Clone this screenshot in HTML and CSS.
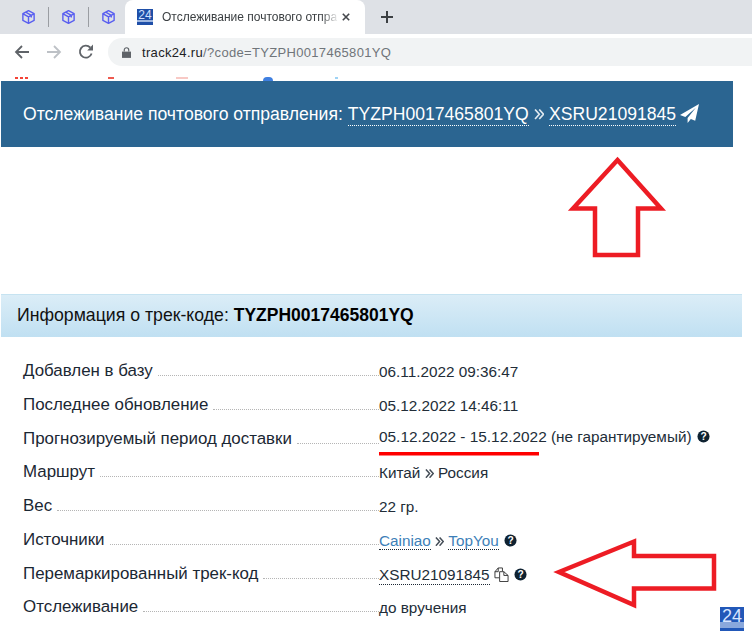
FILE: index.html
```html
<!DOCTYPE html>
<html lang="ru">
<head>
<meta charset="utf-8">
<title>Отслеживание почтового отправления</title>
<link rel="stylesheet" href="styles.css">
</head>
<body>
<div class="tabstrip">
  <div class="pinned">
    <svg class="cube" viewBox="0 0 16 16"><path d="M8 1.2 14 4.4V11.6L8 14.8 2 11.6V4.4ZM2.3 4.6 8 7.8 13.7 4.6M8 7.8V14.6M5 2.9 11 6.2V8.6"/></svg>
    <span class="sep"></span>
    <svg class="cube" viewBox="0 0 16 16"><path d="M8 1.2 14 4.4V11.6L8 14.8 2 11.6V4.4ZM2.3 4.6 8 7.8 13.7 4.6M8 7.8V14.6M5 2.9 11 6.2V8.6"/></svg>
    <span class="sep"></span>
    <svg class="cube" viewBox="0 0 16 16"><path d="M8 1.2 14 4.4V11.6L8 14.8 2 11.6V4.4ZM2.3 4.6 8 7.8 13.7 4.6M8 7.8V14.6M5 2.9 11 6.2V8.6"/></svg>
  </div>
  <div class="tab">
    <span class="favicon">24</span>
    <span class="tabtitle">Отслеживание почтового отпра</span>
    <svg class="tabclose" viewBox="0 0 10 10"><path d="M1 1 9 9M9 1 1 9"/></svg>
  </div>
  <svg class="newtab" viewBox="0 0 12 12"><path d="M6 0V12M0 6H12"/></svg>
</div>
<div class="toolbar">
  <svg class="nav" viewBox="0 0 16 16"><path class="dark" d="M15 8H2M8 2 2 8 8 14"/></svg>
  <svg class="nav" viewBox="0 0 16 16"><path class="light" d="M1 8H14M8 2 14 8 8 14"/></svg>
  <svg class="nav" viewBox="0 0 16 16"><path class="dark" d="M13.6 9.5A6 6 0 1 1 12.2 3.5"/><path class="fill" d="M9.2 6.4H15V.6Z"/></svg>
  <div class="omnibox">
    <svg class="lock" viewBox="0 0 10 12"><path class="fill" d="M0 5H10V12H0Z"/><path class="shackle" d="M2.500 5V3.200A2.500 2.500 0 0 1 7.500 3.200V5"/></svg>
    <span class="url"><span class="host">track24.ru</span>/?code=TYZPH0017465801YQ</span>
  </div>
</div>
<div class="bookmarks">
  <i class="sliver s1"></i><i class="sliver s2"></i><i class="sliver s3"></i><i class="sliver s4"></i><i class="sliver s5"></i>
</div>
<main class="page">
  <h1 class="banner">Отслеживание почтового отправления: <span class="code">TYZPH0017465801YQ</span> <svg class="chev" viewBox="0 0 10 10"><path d="M1 .5 5 5 1 9.500M5 .5 9 5 5 9.500"/></svg> <span class="code">XSRU21091845</span>
    <svg class="plane" viewBox="0 0 20 20"><path d="M20 0 0 11.500l5.600 2.300L16.600 4 8 14.800V20l3.400-4.200 4.600 1.900Z"/></svg>
  </h1>
  <h2 class="infobar">Информация о трек-коде: <b>TYZPH0017465801YQ</b></h2>
  <div class="rows">
    <div class="row"><span class="label">Добавлен в базу</span><span class="dots"></span><span class="value">06.11.2022 09:36:47</span></div>
    <div class="row"><span class="label">Последнее обновление</span><span class="dots"></span><span class="value">05.12.2022 14:46:11</span></div>
    <div class="row"><span class="label">Прогнозируемый период доставки</span><span class="dots"></span><span class="value raised"><span class="big">05.12.2022 - 15.12.2022</span> (не гарантируемый) <svg class="help" viewBox="0 0 14 14"><circle cx="7" cy="7" r="6.500"/><text x="7" y="10.600">?</text></svg></span></div>
    <div class="row"><span class="label">Маршрут</span><span class="dots"></span><span class="value">Китай <svg class="chev" viewBox="0 0 10 10"><path d="M1 .5 5 5 1 9.500M5 .5 9 5 5 9.500"/></svg> Россия</span></div>
    <div class="row"><span class="label">Вес</span><span class="dots"></span><span class="value">22 гр.</span></div>
    <div class="row"><span class="label">Источники</span><span class="dots"></span><span class="value"><a class="link">Cainiao</a> <svg class="chev" viewBox="0 0 10 10"><path d="M1 .5 5 5 1 9.500M5 .5 9 5 5 9.500"/></svg> <a class="link">TopYou</a> <svg class="help" viewBox="0 0 14 14"><circle cx="7" cy="7" r="6.500"/><text x="7" y="10.600">?</text></svg></span></div>
    <div class="row"><span class="label">Перемаркированный трек-код</span><span class="dots"></span><span class="value"><span class="code dark-code">XSRU21091845</span> <svg class="copy" viewBox="0 0 16 16"><path d="M5.500 11.500H1V5L4.500 1H9V4.500M4.500 1V5H1M6 5H10.500L15 9V15.500H6ZM10.500 5V9H15"/></svg> <svg class="help" viewBox="0 0 14 14"><circle cx="7" cy="7" r="6.500"/><text x="7" y="10.600">?</text></svg></span></div>
    <div class="row"><span class="label">Отслеживание</span><span class="dots"></span><span class="value">до вручения</span></div>
  </div>
</main>
<svg class="annot" viewBox="0 0 752 639" width="752" height="639">
  <path class="arrow" d="M617.500 160 661 208.500H638V255H595V208.500H573Z"/>
  <path class="arrow" d="M634 541.500V556H714V588.500H634V605L559 572Z"/>
  <path class="uline" d="M379 453.700H539"/>
</svg>
<span class="badge">24</span>
</body>
</html>
```

FILE: styles.css
```css
* { box-sizing: border-box; }
html, body { margin: 0; padding: 0; }
body {
  width: 752px;
  height: 639px;
  overflow: hidden;
  position: relative;
  background: #fff;
  font-family: "Liberation Sans", Arial, sans-serif;
  color: #1b2733;
}
.tabstrip {
  height: 34px;
  background: #dee1e6;
  display: flex;
  align-items: flex-start;
}
.pinned {
  width: 125px;
  height: 34px;
  padding-left: 21px;
  display: flex;
  align-items: center;
}
.cube { width: 15px; height: 16px; flex: none; }
.cube path { fill: none; stroke: #5a5ff0; stroke-width: 1.5; stroke-linejoin: round; }
.sep { width: 1px; height: 20px; background: #9a9da2; margin: 0 12px; flex: none; }
.tab {
  width: 240px;
  height: 34px;
  background: #fff;
  border-radius: 8px 8px 0 0;
  display: flex;
  align-items: center;
  padding-left: 12px;
}
.favicon {
  width: 16px;
  height: 16px;
  flex: none;
  background: linear-gradient(#1f4fa8 0 68%, #9db6e0 68% 84%, #1f4fa8 84%);
  color: #cfe0ff;
  font-size: 12px;
  line-height: 12px;
  text-align: center;
}
.tabtitle {
  font-size: 12px;
  margin-left: 9px;
  width: 177px;
  white-space: nowrap;
  overflow: hidden;
  color: #3c4043;
  -webkit-mask-image: linear-gradient(90deg, #000 90%, transparent);
  mask-image: linear-gradient(90deg, #000 90%, transparent);
}
.tabclose { width: 8px; height: 8px; margin-left: 3px; flex: none; }
.tabclose path { stroke: #45484c; stroke-width: 2; fill: none; }
.newtab { width: 12px; height: 12px; margin: 11px 0 0 16px; flex: none; }
.newtab path { stroke: #3c4043; stroke-width: 2; fill: none; }
.toolbar {
  height: 32px;
  display: flex;
  align-items: center;
  padding-left: 14px;
  background: #fff;
}
.nav { width: 16px; height: 16px; flex: none; margin-right: 16px; margin-top: 4px; }
.nav path { fill: none; stroke-width: 1.8; }
.nav .dark { stroke: #5f6368; }
.nav .light { stroke: #bdc1c6; }
.nav .fill { fill: #5f6368; stroke: none; }
.omnibox {
  flex: 1;
  height: 28px;
  margin-top: 4px;
  margin-left: -2px;
  background: #f1f3f4;
  border-radius: 14px 0 0 14px;
  display: flex;
  align-items: center;
  padding-left: 14px;
}
.lock { width: 9px; height: 11px; flex: none; }
.lock .fill { fill: #5f6368; }
.lock .shackle { fill: none; stroke: #5f6368; stroke-width: 1.3; }
.url { font-size: 13px; margin-left: 11px; color: #70757a; letter-spacing: .025em; }
.host { color: #202124; }
.bookmarks { height: 15px; position: relative; }
.sliver { position: absolute; top: 11px; height: 2px; }
.s1 { left: 15px; width: 13px; background: repeating-linear-gradient(90deg, #f44336 0 3px, #fff 3px 5px); }
.s2 { left: 108px; width: 6px; background: #ee5a4f; }
.s3 { left: 176px; width: 12px; background: #f8c9c5; }
.s4 { left: 263px; width: 10px; height: 4px; top: 11px; background: #3f7fe0; border-radius: 5px 5px 0 0; }
.s5 { left: 335px; width: 3px; background: #9fd3f5; }
.page { display: flex; flex-direction: column; align-items: flex-start; padding-left: 1px; }
.banner {
  width: 732px;
  height: 66px;
  margin: 0 0 147px;
  background: #2b6591;
  color: #fff;
  font-size: 17.6px;
  font-weight: 400;
  line-height: 66px;
  padding-left: 22px;
  white-space: nowrap;
}
.code { border-bottom: 1px dotted #fff; padding-bottom: 1px; }
.dark-code { border-bottom-color: #1b2733; }
.chev { width: .6em; height: .6em; vertical-align: 0; }
.chev path { fill: none; stroke: currentColor; stroke-width: 1.6; opacity: .85; }
.plane { width: 19px; height: 19px; fill: #fff; vertical-align: -3px; margin-left: -1px; }
.infobar {
  width: 741px;
  height: 43px;
  margin: 0;
  padding-left: 16px;
  background: linear-gradient(#dbedf7, #c0e0f2);
  border-top: 1px solid #c6e3f1;
  color: #111;
  font-size: 17.7px;
  font-weight: 400;
  line-height: 41px;
}
.infobar b { font-size: 17.5px; font-weight: 700; color: #000; }
.rows { width: 741px; display: flex; flex-direction: column; padding: 24px 0 0 22px; }
.row { height: 33.75px; display: flex; align-items: flex-start; font-size: 16.9px; line-height: 20px; }
.label { white-space: nowrap; }
.dots { flex: 1; height: 15px; margin: 0 0 0 5px; border-bottom: 1px dotted #b5b5b5; }
.value { width: 363px; font-size: 15.3px; line-height: 20px; padding-top: 1px; white-space: nowrap; color: #222d38; }
.raised { margin-top: -3px; }
.big { font-size: 15.4px; }
.link { color: #3d7fb8; border-bottom: 1px dotted #1b2733; }
.help { width: 13px; height: 13px; vertical-align: -1px; margin-left: 1px; }
.help circle { fill: #0f2231; }
.help text { fill: #fff; font-family: "Liberation Sans", sans-serif; font-weight: 700; font-size: 11px; text-anchor: middle; }
.copy { width: 15px; height: 15px; vertical-align: -2px; }
.copy path { fill: none; stroke: #333; stroke-width: 1; }
.annot { position: absolute; left: 0; top: 0; pointer-events: none; }
.arrow { fill: none; stroke: #ed1c24; stroke-width: 4.5; stroke-linejoin: miter; }
.uline { stroke: #f00; stroke-width: 3.5; fill: none; }
.badge {
  position: absolute;
  left: 720px;
  top: 607px;
  width: 24px;
  height: 24px;
  background: linear-gradient(#2258b8 0 62%, #8aa8dc 62% 86%, #2258b8 86%);
  color: #d8e5ff;
  font-size: 18px;
  line-height: 18px;
  text-align: center;
}
```
